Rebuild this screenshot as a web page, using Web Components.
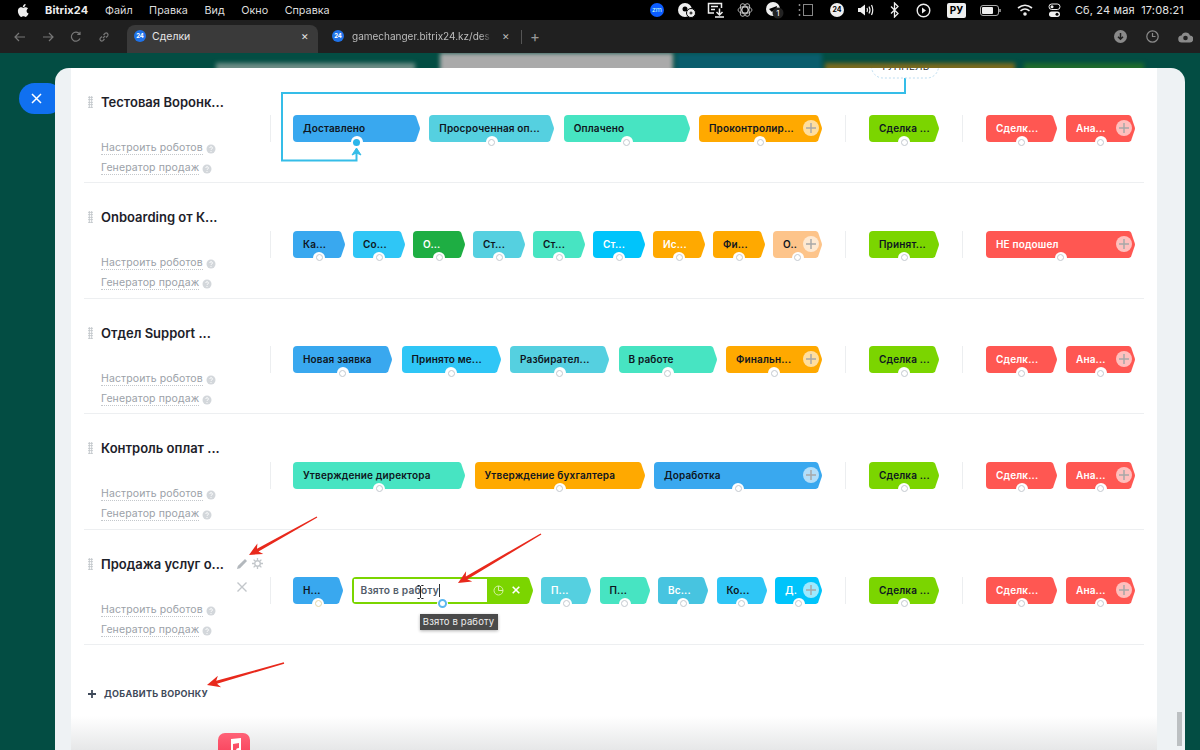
<!DOCTYPE html>
<html lang="ru">
<head>
<meta charset="utf-8">
<title>Сделки</title>
<style>
  html, body { margin: 0; padding: 0; height: 750px; overflow: hidden; background: #000; }
  body { font-family: Inter, "Liberation Sans", sans-serif; display: flex; flex-direction: column; position: relative; }
</style>
</head>
<body>
<mac-menubar></mac-menubar>
<browser-toolbar></browser-toolbar>
<crm-desk>
  <funnel-row name="Тестовая Воронк...">
    <funnel-stage slot="work" style="width:127px" color="#39a8ef" dot="active">Доставлено</funnel-stage>
    <funnel-stage slot="work" style="width:125px" color="#55d0e0">Просроченная оп...</funnel-stage>
    <funnel-stage slot="work" style="width:126px" color="#47e4c2">Оплачено</funnel-stage>
    <funnel-stage slot="work" style="width:123px" color="#ffa900" plus>Проконтролир...</funnel-stage>
    <funnel-stage slot="success" style="width:70px" color="#7bd500">Сделка ...</funnel-stage>
    <funnel-stage slot="fail" style="width:71px" color="#ff5752" light>Сделк...</funnel-stage>
    <funnel-stage slot="fail" style="width:69px" color="#ff5752" light plus>Ана...</funnel-stage>
  </funnel-row>
  <funnel-row name="Onboarding от К...">
    <funnel-stage slot="work" style="width:52px" color="#39a8ef">Ка...</funnel-stage>
    <funnel-stage slot="work" style="width:52px" color="#2fc6f6">Со...</funnel-stage>
    <funnel-stage slot="work" style="width:52px" color="#1eae43" light>О...</funnel-stage>
    <funnel-stage slot="work" style="width:52px" color="#55d0e0">Ст...</funnel-stage>
    <funnel-stage slot="work" style="width:52px" color="#47e4c2">Ст...</funnel-stage>
    <funnel-stage slot="work" style="width:52px" color="#00c4fb" light>Ст...</funnel-stage>
    <funnel-stage slot="work" style="width:52px" color="#ffa900" light>Ис...</funnel-stage>
    <funnel-stage slot="work" style="width:52px" color="#ffa900">Фи...</funnel-stage>
    <funnel-stage slot="work" style="width:49px" color="#fdc48a" plus>О..</funnel-stage>
    <funnel-stage slot="success" style="width:70px" color="#7bd500">Принят...</funnel-stage>
    <funnel-stage slot="fail" style="width:149px" color="#ff5752" light plus>НЕ подошел</funnel-stage>
  </funnel-row>
  <funnel-row name="Отдел Support ...">
    <funnel-stage slot="work" style="width:99px" color="#39a8ef">Новая заявка</funnel-stage>
    <funnel-stage slot="work" style="width:99px" color="#2fc6f6">Принято ме...</funnel-stage>
    <funnel-stage slot="work" style="width:99px" color="#55d0e0">Разбирател...</funnel-stage>
    <funnel-stage slot="work" style="width:98px" color="#47e4c2">В работе</funnel-stage>
    <funnel-stage slot="work" style="width:96px" color="#ffa900" plus>Финальн...</funnel-stage>
    <funnel-stage slot="success" style="width:70px" color="#7bd500">Сделка ...</funnel-stage>
    <funnel-stage slot="fail" style="width:71px" color="#ff5752" light>Сделк...</funnel-stage>
    <funnel-stage slot="fail" style="width:69px" color="#ff5752" light plus>Ана...</funnel-stage>
  </funnel-row>
  <funnel-row name="Контроль оплат ...">
    <funnel-stage slot="work" style="width:172px" color="#47e4c2">Утверждение директора</funnel-stage>
    <funnel-stage slot="work" style="width:170px" color="#ffa900">Утверждение бухгалтера</funnel-stage>
    <funnel-stage slot="work" style="width:168px" color="#39a8ef" plus>Доработка</funnel-stage>
    <funnel-stage slot="success" style="width:70px" color="#7bd500">Сделка ...</funnel-stage>
    <funnel-stage slot="fail" style="width:71px" color="#ff5752" light>Сделк...</funnel-stage>
    <funnel-stage slot="fail" style="width:69px" color="#ff5752" light plus>Ана...</funnel-stage>
  </funnel-row>
  <funnel-row name="Продажа услуг о..." tools>
    <funnel-stage slot="work" style="width:50px" color="#39a8ef" dot="warm">Н...</funnel-stage>
    <stage-edit slot="work" style="width:181px" value="Взято в работу"></stage-edit>
    <funnel-stage slot="work" style="width:50px" color="#55d0e0" light>П...</funnel-stage>
    <funnel-stage slot="work" style="width:50px" color="#47e4c2">П...</funnel-stage>
    <funnel-stage slot="work" style="width:50px" color="#47c4e0" light>Вс...</funnel-stage>
    <funnel-stage slot="work" style="width:50px" color="#2fc6f6">Ко...</funnel-stage>
    <funnel-stage slot="work" style="width:47px" color="#00c4fb" light plus>Д.</funnel-stage>
    <funnel-stage slot="success" style="width:70px" color="#7bd500">Сделка ...</funnel-stage>
    <funnel-stage slot="fail" style="width:71px" color="#ff5752" light>Сделк...</funnel-stage>
    <funnel-stage slot="fail" style="width:69px" color="#ff5752" light plus>Ана...</funnel-stage>
  </funnel-row>
  <add-funnel>Добавить воронку</add-funnel>
</crm-desk>
<arrow-layer></arrow-layer>

<script>
  const TIP = '<svg class="tip" width="8" height="27" viewBox="0 0 8 27"><path d="M0 0H1.5Q3.4 0 4.2 1.8L7.7 12Q8.2 13.500 7.700 15L4.200 25.200Q3.400 27 1.500 27H0Z" fill="currentColor"/></svg>';

  class MacMenubar extends HTMLElement {
    connectedCallback() {
      const icons = [
        [30, '<span class="zm">zm</span>'],
        [30, '<svg width="20" height="16" viewBox="0 0 20 16"><circle cx="8" cy="8" r="7" fill="#eee"/><circle cx="8" cy="7" r="2.500" fill="#000"/><circle cx="14" cy="11" r="4.500" fill="#eee" stroke="#000"/><path d="M12.500 11h3M14 9.500v3" stroke="#000"/></svg>'],
        [29, '<svg width="18" height="16" viewBox="0 0 18 16" fill="none" stroke="#eee" stroke-width="1.500"><path d="M7 11H1.500V1.500h13V6"/><path d="M4 4.500h7M4 7.500h4"/><path d="M12.500 6.500v6M9.500 10l3 3 3-3M8 15h9"/></svg>'],
        [29, '<svg width="16" height="16" viewBox="0 0 16 16" fill="none" stroke="#ccc" stroke-width=".8"><circle cx="8" cy="8" r="3"/><ellipse cx="8" cy="8" rx="7" ry="3.500"/><ellipse cx="8" cy="8" rx="7" ry="3.500" transform="rotate(60 8 8)"/><ellipse cx="8" cy="8" rx="7" ry="3.500" transform="rotate(120 8 8)"/></svg>'],
        [31, '<svg width="20" height="18" viewBox="0 0 20 18"><circle cx="8" cy="8" r="7" fill="#eee"/><path d="M4 8l8-3-1 6-2-2-2 2z" fill="#000"/><circle cx="13" cy="12" r="5.500" fill="#222"/><text x="13" y="15" font-size="8" fill="#fff" text-anchor="middle">1</text></svg>'],
        [31, '<svg width="16" height="14" viewBox="0 0 16 14" fill="none" stroke="#888"><rect x="5.500" y="1.500" width="9" height="11"/><path d="M1.500 1v2M1.500 6v2M1.500 11v2" stroke-width="1.500"/></svg>'],
        [30, '<span class="b24">24</span>'],
        [29, '<svg width="18" height="14" viewBox="0 0 18 14" fill="#eee"><path d="M1 5h2.500L8 1.500v11L3.500 9H1z"/><g fill="none" stroke="#eee" stroke-width="1.200"><path d="M10 5q1 2 0 4"/><path d="M12 3.500q2 3.500 0 7"/><path d="M14.500 2q2.500 5 0 10"/></g></svg>'],
        [28, '<svg width="10" height="16" viewBox="0 0 10 16" fill="none" stroke="#eee" stroke-width="1.300"><path d="M1 4.500l7 7-3.500 3.500V1L8 4.500l-7 7"/></svg>'],
        [30, '<svg width="15" height="15" viewBox="0 0 15 15"><circle cx="7.500" cy="7.500" r="6.300" fill="none" stroke="#eee" stroke-width="1.400"/><path d="M6 4.500l4 3-4 3z" fill="#eee"/></svg>'],
        [35, '<span class="lang">РУ</span>'],
        [35, '<svg width="22" height="11" viewBox="0 0 22 11"><rect x=".500" y=".500" width="18" height="10" rx="2.500" fill="none" stroke="#aaa"/><rect x="2" y="2" width="11" height="7" rx="1" fill="#eee"/><path d="M20 4v3" stroke="#aaa" stroke-width="1.500"/></svg>'],
        [32, '<svg width="16" height="12" viewBox="0 0 16 12" fill="none" stroke="#eee" stroke-width="1.600"><path d="M1 4q7-5.500 14 0"/><path d="M3.500 6.800q4.500-3.600 9 0"/><circle cx="8" cy="10" r="1" fill="#eee"/></svg>'],
        [27, '<svg width="13" height="15" viewBox="0 0 13 15"><rect x="1" y="1" width="11" height="5.500" rx="2.700" fill="none" stroke="#eee"/><circle cx="4" cy="3.700" r="1.500" fill="#eee"/><rect x="1" y="8.500" width="11" height="5.500" rx="2.700" fill="#eee"/><circle cx="9" cy="11.200" r="1.500" fill="#000"/></svg>']
      ].map(([w, svg]) => `<span class="i" style="width:${w}px">${svg}</span>`).join('');
      this.attachShadow({ mode: 'open' }).innerHTML = `
        <style>
          :host { display: flex; align-items: center; height: 20px; background: #000; color: #eee; font-size: 11px; flex: none; }
          .apple { margin-left: 16px; width: 13px; height: 15px; }
          .app { font-weight: 700; margin-left: 16px; width: 60px; letter-spacing: .1px; }
          .m { margin-right: 16.500px; color: #ddd; font-size: 10.800px; }
          .right { margin-left: auto; display: flex; align-items: center; }
          .i { display: flex; justify-content: center; align-items: center; }
          .zm { width: 14px; height: 14px; border-radius: 50%; background: #0b5cff; color: #cfe; font-size: 7px; line-height: 14px; text-align: center; }
          .b24 { width: 14px; height: 14px; border-radius: 50%; background: #eee; color: #000; font-size: 7px; font-weight: 700; line-height: 14px; text-align: center; }
          .lang { background: #eee; color: #000; font-size: 10px; font-weight: 700; padding: 1px 3px; border-radius: 2px; line-height: 13px; }
          .clock { margin: 0 16px 0 7px; letter-spacing: .15px; color: #e4e4e4; }
        </style>
        <svg class="apple" viewBox="0 0 14 16" fill="#eee"><path d="M11.400 8.500c0-1.700 1.400-2.500 1.500-2.600-.8-1.200-2.100-1.400-2.500-1.400-1.100-.1-2.100.6-2.600.6s-1.400-.6-2.300-.6c-1.200 0-2.300.7-2.900 1.700-1.200 2.100-.3 5.300.9 7 .6.800 1.300 1.800 2.200 1.700.9 0 1.200-.6 2.300-.6s1.400.6 2.300.6c1 0 1.600-.8 2.200-1.700.7-1 1-1.900 1-2-.1 0-2.100-.8-2.100-2.700zM9.600 3.300c.5-.6.800-1.400.7-2.300-.7 0-1.600.5-2.100 1.100-.5.500-.9 1.400-.8 2.200.8.100 1.700-.4 2.200-1z"/></svg>
        <span class="app">Bitrix24</span>
        <span class="m">Файл</span><span class="m">Правка</span><span class="m">Вид</span><span class="m">Окно</span><span class="m">Справка</span>
        <span class="right">${icons}<span class="clock">Сб, 24 мая&nbsp; 17:08:21</span></span>`;
    }
  }

  class BrowserToolbar extends HTMLElement {
    connectedCallback() {
      this.attachShadow({ mode: 'open' }).innerHTML = `
        <style>
          :host { display: flex; align-items: flex-end; height: 33px; background: #202020; color: #e6e6e6; font-size: 10.500px; flex: none; }
          .nav { display: flex; align-items: center; height: 33px; width: 127px; padding-left: 14px; gap: 16px; box-sizing: border-box; }
          .nav svg { flex: none; }
          .tab { width: 191px; height: 28px; background: #3a3a3a; border-radius: 8px 8px 0 0; display: flex; align-items: center; padding: 0 7px 6px; box-sizing: border-box; gap: 6px; }
          .tab.off { background: none; width: 203px; color: #bdbdbd; padding: 0 0 6px 14px; font-size: 10px; gap: 8px; }
          .fav { width: 12px; height: 12px; border-radius: 50%; background: #1f72e8; color: #fff; font-size: 6px; font-weight: 700; line-height: 12px; text-align: center; flex: none; }
          .label { flex: 1; white-space: nowrap; overflow: hidden; }
          .off .label { -webkit-mask-image: linear-gradient(90deg, #000 92%, transparent); mask-image: linear-gradient(90deg, #000 92%, transparent); }
          .close { font-size: 9px; width: 12px; text-align: center; }
          .sep { width: 1px; height: 14px; background: #555; margin: 0 0 9px 0; }
          .plus { color: #999; font-size: 15px; margin: 0 0 8px 8px; line-height: 16px; }
          .tools { margin-left: auto; height: 33px; display: flex; align-items: center; gap: 19px; margin-right: 7px; }
        </style>
        <div class="nav">
          <svg width="12" height="10" viewBox="0 0 12 10" fill="none" stroke="#777" stroke-width="1.200"><path d="M11 5H1M5 1L1 5l4 4"/></svg>
          <svg width="12" height="10" viewBox="0 0 12 10" fill="none" stroke="#777" stroke-width="1.200"><path d="M1 5h10M7 1l4 4-4 4"/></svg>
          <svg width="12" height="12" viewBox="0 0 12 12" fill="none" stroke="#777" stroke-width="1.200"><path d="M10 7.500A4.500 4.500 0 1 1 9.500 3M10 .8V3.500H7.300"/></svg>
          <svg width="12" height="12" viewBox="0 0 12 12" fill="none" stroke="#777" stroke-width="1.200"><path d="M5 7l2.200-2.200M4 5.500L2.300 7.200a1.800 1.800 0 0 0 2.500 2.500L6.500 8M5.500 4l1.700-1.700a1.800 1.800 0 0 1 2.500 2.500L8 6.500"/></svg>
        </div>
        <div class="tab"><span class="fav">24</span><span class="label">Сделки</span><span class="close">✕</span></div>
        <div class="tab off"><span class="fav">24</span><span class="label">gamechanger.bitrix24.kz/des</span><span class="close" style="margin:0 9px 0 0">✕</span></div>
        <span class="sep"></span><span class="plus">+</span>
        <div class="tools">
          <svg width="13" height="13" viewBox="0 0 13 13"><circle cx="6.500" cy="6.500" r="6.500" fill="#8a8a8a"/><path d="M6.500 3v6M4 6.800l2.500 2.500L9 6.800" fill="none" stroke="#202020" stroke-width="1.500"/></svg>
          <svg width="13" height="13" viewBox="0 0 13 13" fill="none" stroke="#8a8a8a" stroke-width="1.200"><circle cx="6.500" cy="6.500" r="5.700"/><path d="M6.500 3v3.500H9.500"/></svg>
          <svg width="15" height="12" viewBox="0 0 15 12"><path d="M4 11.500a3.500 3.500 0 0 1-.5-7A4.500 4.500 0 0 1 12 4.500a3.500 3.500 0 0 1-.5 7z" fill="#8a8a8a"/><circle cx="7.500" cy="7" r="2.300" fill="#202020"/></svg>
        </div>`;
    }
  }

  class CrmDesk extends HTMLElement {
    connectedCallback() {
      this.attachShadow({ mode: 'open' }).innerHTML = `
        <style>
          :host { display: block; flex: 1; position: relative; overflow: hidden; background: #034d43; }
          .blurs { position: absolute; left: 0; right: 0; top: 0; height: 20px; display: flex; filter: blur(2px); }
          .blurs span { height: 20px; flex: none; }
          .close-btn { position: absolute; left: 19px; top: 30px; width: 44px; height: 31px; border-radius: 16px; background: #1070f0; color: #fff; }
          .close-btn svg { position: absolute; left: 12px; top: 10px; }
          .panel { position: absolute; left: 55px; top: 15px; width: 1130px; height: 690px; background: #eef2f4; border-radius: 14px 14px 0 0; overflow: hidden; }
          .sheet { margin-left: 16px; width: 1086px; height: 100%; background: #fff; padding-left: 13px; box-sizing: border-box; position: relative; }
          .thumb { position: absolute; left: 1122px; top: 644px; width: 5px; height: 34px; background: #bcc0c2; }
          .fade { position: absolute; left: 0; right: 0; top: 648px; height: 34px; background: linear-gradient(rgba(230,231,232,0), rgba(230,231,232,1)); }
          .dock { position: absolute; left: 218px; top: 680px; width: 32px; height: 32px; border-radius: 7px; background: linear-gradient(#ff6277, #f5334f); }
          .dock svg { position: absolute; left: 10px; top: 5px; }
          .tunnel { position: absolute; left: 0; top: 0; }
          .tunnel-label { position: absolute; left: 816px; top: -8px; width: 68px; text-align: center; font-size: 10px; color: #333; letter-spacing: .2px; }
        </style>
        <div class="blurs">
          <span style="width:216px"></span><span style="width:199px;background:#6d8d86;margin-top:10px"></span>
          <span style="width:25px"></span><span style="width:233px;background:#aaa"></span>
          <span style="width:3px"></span><span style="width:146px;background:#0a5d6c"></span>
          <span style="width:3px"></span><span style="width:190px;background:#7a6a1e;margin-top:10px"></span>
          <span style="width:9px"></span><span style="width:120px;background:#1f6a2c;margin-top:10px"></span>
        </div>
        <div class="close-btn"><svg width="11" height="11" viewBox="0 0 11 11" fill="none" stroke="#fff" stroke-width="1.500"><path d="M1 1l9 9M10 1l-9 9"/></svg></div>
        <div class="panel">
          <div class="sheet"><slot></slot><div class="fade"></div></div>
          <svg class="tunnel" width="1130" height="110" fill="none">
            <g transform="translate(-55,-68)" stroke="#35bde8" stroke-width="2">
              <path d="M905 78V93H282V160.500H356.500V150"/>
              <path d="M352 155l4.500-7 4.500 7-4.500-2z" fill="#35bde8" stroke-width="1"/>
              <rect x="871.500" y="55" width="67" height="23" rx="11.500" stroke="#bcdcf0" stroke-width="1" stroke-dasharray="2 2" fill="#fff"/>
            </g>
          </svg>
          <div class="tunnel-label">ТУННЕЛЬ</div>
          <div class="thumb"></div>
        </div>
        <div class="dock"><svg width="14" height="18" viewBox="0 0 14 18" fill="#fff"><path d="M3 1l10-1v12h-2V5L5 6v9H3z"/><circle cx="3" cy="15" r="3"/><circle cx="10.500" cy="12.500" r="2.500"/></svg></div>`;
    }
  }

  class FunnelRow extends HTMLElement {
    connectedCallback() {
      const tools = this.hasAttribute('tools') ? `
        <svg class="pen" width="11" height="11" viewBox="0 0 11 11" fill="#b3b8bd"><path d="M0 11l.8-3L8 1l2 2-7 7.200z"/></svg>
        <svg class="gear" width="11" height="11" viewBox="0 0 11 11" fill="none" stroke="#c2c6ca"><circle cx="5.500" cy="5.500" r="2.800" stroke-width="1.400"/><path d="M5.500 0v2M5.500 9v2M0 5.500h2M9 5.500h2M1.600 1.600L3 3M8 8l1.400 1.400M1.600 9.400L3 8M8 3l1.400-1.400" stroke-width="1.300"/></svg>
        <svg class="cross" width="10" height="10" viewBox="0 0 10 10" fill="none" stroke="#c2c6ca" stroke-width="1.400"><path d="M.5.500l9 9M9.500.500l-9 9"/></svg>` : '';
      const help = '<svg width="10" height="10" viewBox="0 0 10 10"><circle cx="5" cy="5" r="4.500" fill="#d3d7db"/><path d="M3.800 4a1.300 1.300 0 1 1 1.700 1.200c-.4.200-.5.400-.5.800" fill="none" stroke="#fff" stroke-width=".9"/><circle cx="5" cy="7.500" r=".6" fill="#fff"/></svg>';
      this.attachShadow({ mode: 'open' }).innerHTML = `
        <style>
          :host { display: flex; width: 1060px; height: 115.400px; box-sizing: border-box; border-bottom: 1px solid #edeff1; position: relative; }
          .head { width: 186px; flex: none; padding: 25px 0 0 4px; box-sizing: border-box; position: relative; }
          .title { display: flex; align-items: center; height: 18px; }
          .grip { width: 5px; height: 12px; flex: none; margin-right: 8px; background: radial-gradient(circle, #bfc4c8 .9px, transparent 1px) 0 0 / 2.500px 2.500px; }
          .name { font-size: 13px; font-weight: 600; color: #1d2129; white-space: nowrap; width: 136px; }
          .pen { flex: none; }
          .gear { margin-left: 4px; flex: none; }
          .cross { position: absolute; left: 153px; top: 52px; }
          .links { margin: 29px 0 0 13px; display: flex; flex-direction: column; gap: 4px; }
          .link { display: flex; align-items: center; gap: 3px; height: 16px; font-size: 10.500px; color: #9ba1a8; letter-spacing: .12px; }
          .link span { border-bottom: 1px dotted #c4c8cc; line-height: 13px; }
          .link svg { margin-top: 2px; }
          .board { display: flex; align-items: flex-start; padding-top: 47.400px; }
          .rule { width: 1px; height: 27px; background: #eceef0; flex: none; }
          .group { display: flex; gap: 9px; margin: 0 23px 0 22px; flex: none; }
          .group.mid { margin-left: 23px; }
          .group.work { width: 529px; justify-content: space-between; gap: 0; }
          .group.success { width: 70px; }
          .group.fail { width: 149px; margin-right: 0; margin-left: 23px; }
        </style>
        <div class="head">
          <div class="title"><i class="grip"></i><span class="name">${this.getAttribute('name')}</span>${tools}</div>
          <div class="links">
            <div class="link"><span>Настроить роботов</span>${help}</div>
            <div class="link"><span>Генератор продаж</span>${help}</div>
          </div>
        </div>
        <div class="board">
          <i class="rule"></i>
          <div class="group work"><slot name="work"></slot></div>
          <i class="rule"></i>
          <div class="group mid success"><slot name="success"></slot></div>
          <i class="rule"></i>
          <div class="group fail"><slot name="fail"></slot></div>
        </div>`;
    }
  }

  class FunnelStage extends HTMLElement {
    connectedCallback() {
      const color = this.getAttribute('color');
      const dot = this.getAttribute('dot') || '';
      const plus = this.hasAttribute('plus') ? '<span class="plus"><svg width="10" height="10" viewBox="0 0 10 10" stroke="#a8a8a8" stroke-width="1.500"><path d="M5 0v10M0 5h10"/></svg></span>' : '';
      this.attachShadow({ mode: 'open' }).innerHTML = `
        <style>
          :host { display: flex; height: 27px; position: relative; flex: none; color: ${color}; }
          .body { flex: 1; min-width: 0; background: ${color}; border-radius: 4px 0 0 4px; padding-left: 10px; font-size: 10px; font-weight: 600; line-height: 27px; letter-spacing: .15px; white-space: nowrap; overflow: hidden; color: ${this.hasAttribute('light') ? '#fff' : '#0e1520'}; }
          .tip { flex: none; }
          .plus { position: absolute; right: 3px; top: 5px; width: 16px; height: 16px; border-radius: 50%; background: rgba(255,255,255,.62); display: flex; align-items: center; justify-content: center; }
          .dot { position: absolute; left: 50%; bottom: -6px; width: 12px; height: 12px; margin-left: -6px; border-radius: 50%; background: #fff; display: flex; align-items: center; justify-content: center; }
          .dot i { width: 5px; height: 5px; border-radius: 50%; border: 1px solid ${dot === 'warm' ? '#e3d6a8' : '#c3c9cf'}; }
          .dot.active i { width: 7px; height: 7px; border: 0; background: #2bb6ea; }
        </style>
        <div class="body"><slot></slot></div>${TIP}${plus}
        <span class="dot ${dot}"><i></i></span>`;
    }
  }

  class StageEdit extends HTMLElement {
    connectedCallback() {
      const value = this.getAttribute('value');
      this.attachShadow({ mode: 'open' }).innerHTML = `
        <style>
          :host { display: flex; height: 27px; position: relative; flex: none; color: #7bd500; }
          .box { flex: 1; display: flex; min-width: 0; background: #7bd500; border-radius: 4px 0 0 4px; padding: 2px 0 2px 2px; box-sizing: border-box; }
          .field { flex: 1; background: #fff; font-size: 10.200px; font-weight: 600; line-height: 23px; padding-left: 7px; color: #525c69; letter-spacing: .2px; white-space: nowrap; }
          .caret { display: inline-block; width: 1px; height: 13px; background: #333; vertical-align: -3px; }
          .act { width: 38px; flex: none; display: flex; align-items: center; gap: 8px; padding-left: 6px; box-sizing: border-box; }
          .tip { flex: none; }
          .dot { position: absolute; left: 86px; bottom: -4px; width: 5px; height: 5px; border-radius: 50%; background: #fff; border: 2.500px solid #5cb7ef; box-shadow: 0 0 0 1px #fff; }
          .hint { position: absolute; left: 68px; top: 37px; height: 16px; width: 78px; background: #4a4a4a; color: #eee; font-size: 9.500px; line-height: 16px; text-align: center; letter-spacing: .15px; box-shadow: 0 1px 3px rgba(0,0,0,.3); white-space: nowrap; }
        </style>
        <div class="box">
          <div class="field">${value}<i class="caret"></i></div>
          <div class="act">
            <svg width="11" height="11" viewBox="0 0 11 11" fill="none" stroke="#d6f2a6"><circle cx="5.500" cy="5.500" r="4.500"/><path d="M5.500 1v4.500H10"/></svg>
            <svg width="8" height="8" viewBox="0 0 8 8" fill="none" stroke="#fff" stroke-width="1.600"><path d="M.7.700l6.600 6.600M7.300.700L.7 7.300"/></svg>
          </div>
        </div>${TIP}
        <span class="dot"></span>
        <div class="hint">${value}</div>`;
    }
  }

  class AddFunnel extends HTMLElement {
    connectedCallback() {
      this.attachShadow({ mode: 'open' }).innerHTML = `
        <style>
          :host { display: flex; align-items: center; margin: 42px 0 0 4px; height: 14px; color: #3f4a5a; font-size: 9px; font-weight: 700; letter-spacing: .3px; text-transform: uppercase; }
          svg { margin-right: 8px; }
        </style>
        <svg width="8" height="8" viewBox="0 0 8 8" stroke="#3f4a5a" stroke-width="1.800"><path d="M4 0v8M0 4h8"/></svg><slot></slot>`;
    }
  }

  class ArrowLayer extends HTMLElement {
    connectedCallback() {
      const arrow = (x1, y1, x2, y2) => {
        const len = Math.hypot(x2 - x1, y2 - y1);
        const dx = (x2 - x1) / len, dy = (y2 - y1) / len;
        const at = (back, side) => `${(x2 - dx * back - dy * side).toFixed(1)},${(y2 - dy * back + dx * side).toFixed(1)}`;
        const tail = (side) => `${(x1 - dy * side).toFixed(1)},${(y1 + dx * side).toFixed(1)}`;
        return `<polygon points="${tail(.7)} ${at(10, 1.5)} ${at(13, 6)} ${x2},${y2} ${at(13, -6)} ${at(10, -1.5)} ${tail(-.7)}"/>`;
      };
      this.attachShadow({ mode: 'open' }).innerHTML = `
        <style>
          :host { position: absolute; left: 0; top: 0; width: 1200px; height: 750px; pointer-events: none; }
        </style>
        <svg width="1200" height="750">
          <g fill="#e8291c">${arrow(317, 517, 249, 555)}${arrow(541, 534, 458, 583)}${arrow(284, 663, 207, 685)}</g>
          <path d="M417.500 585.500h2l1 1 1-1h2M420.500 586.500v11M417.500 598.500h2l1-1 1 1h2" fill="none" stroke="#222"/>
        </svg>`;
    }
  }

  customElements.define('mac-menubar', MacMenubar);
  customElements.define('browser-toolbar', BrowserToolbar);
  customElements.define('crm-desk', CrmDesk);
  customElements.define('funnel-row', FunnelRow);
  customElements.define('funnel-stage', FunnelStage);
  customElements.define('stage-edit', StageEdit);
  customElements.define('add-funnel', AddFunnel);
  customElements.define('arrow-layer', ArrowLayer);
</script>
</body>
</html>
